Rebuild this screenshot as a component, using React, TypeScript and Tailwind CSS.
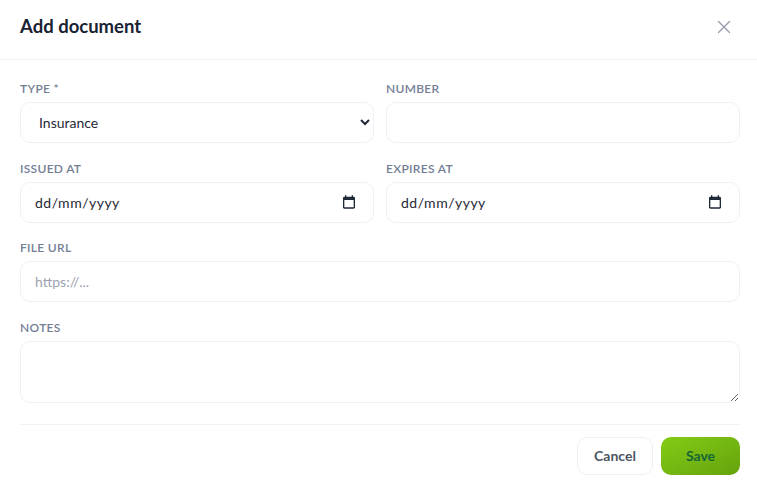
const labelCls = "block h-[16px] mb-[5px] text-[12px] leading-[16px] font-semibold tracking-[0.3px] text-[#737d94]";
const fieldCls = "block w-full h-[41px] rounded-[10px] border border-[#eef0f6] bg-white text-[14px] text-[#1f2937] outline-none";

function Field({ label, children }: { label: string; children: React.ReactNode }) {
  return (
    <div className="min-w-0">
      <label className={labelCls}>{label}</label>
      {children}
    </div>
  );
}

function DateField() {
  return (
    <div className={`${fieldCls} flex items-center justify-between pl-[14px] pr-[16px]`}>
      <span className="tracking-[0.5px]">dd/mm/yyyy</span>
      <svg width="16" height="16" viewBox="0 0 24 24" fill="#1f2937" aria-hidden="true">
        <path d="M19 4h-1V2h-2v2H8V2H6v2H5c-1.1 0-2 .9-2 2v14c0 1.1.9 2 2 2h14c1.1 0 2-.9 2-2V6c0-1.1-.9-2-2-2zm0 16H5V9h14v11z" />
      </svg>
    </div>
  );
}

export default function App() {
  return (
    <div className="w-[760px] h-[488px] bg-white overflow-hidden font-['Lato','Noto_Sans',sans-serif]">
      <header className="h-[60px] border-b border-[#f1f3f7] pl-[20px] pr-[29px] pb-[6px] flex items-center justify-between">
        <h2 className="text-[18.5px] font-bold text-[#1a2234]">Add document</h2>
        <button className="text-[#969dac]" aria-label="Close">
          <svg width="14" height="14" viewBox="0 0 14 14" fill="none" stroke="currentColor" strokeWidth="1.4" strokeLinecap="round"><path d="M1.5 1.5 12.5 12.5M12.5 1.5 1.5 12.5" /></svg>
        </button>
      </header>
      <form className="px-[20px] pt-[21px]">
        <div className="grid grid-cols-2 gap-x-[12px] gap-y-[17.6px]">
          <Field label="TYPE *">
            <select defaultValue="Insurance" className={`${fieldCls} px-[14px]`}>
              <option>Insurance</option>
            </select>
          </Field>
          <Field label="NUMBER">
            <input className={`${fieldCls} px-[14px]`} />
          </Field>
          <Field label="ISSUED AT">
            <DateField />
          </Field>
          <Field label="EXPIRES AT">
            <DateField />
          </Field>
          <div className="col-span-2">
            <Field label="FILE URL">
              <input placeholder="https://..." className={`${fieldCls} px-[14px] placeholder:text-[#9ca3af]`} />
            </Field>
          </div>
          <div className="col-span-2">
            <Field label="NOTES">
              <textarea className={`${fieldCls} !h-[62px] px-[14px] py-[10px]`} />
            </Field>
          </div>
        </div>
        <div className="mt-[21px] border-t border-[#f1f3f7] pt-[12px] flex justify-end gap-[8px]">
          <button type="button" className="w-[76px] h-[38px] rounded-[10px] border border-[#eef0f6] bg-white text-[14px] font-bold text-[#4b5563]">Cancel</button>
          <button type="button" className="w-[79px] h-[38px] rounded-[10px] bg-gradient-to-br from-[#84cc16] to-[#65a30d] text-[14px] font-bold text-[#166534]">Save</button>
        </div>
      </form>
    </div>
  );
}
